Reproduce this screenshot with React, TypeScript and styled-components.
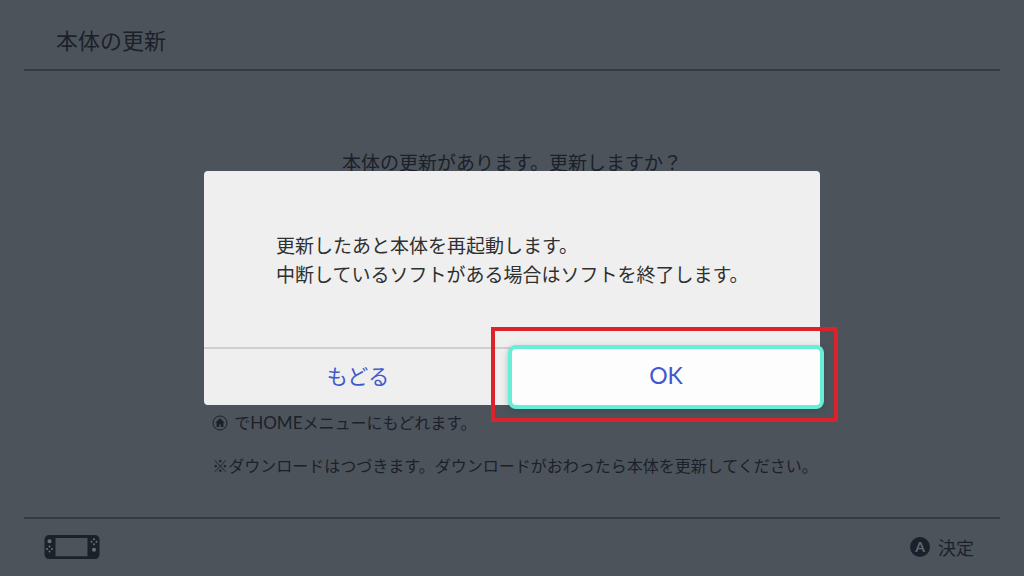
import React from "react";
import styled, { createGlobalStyle } from "styled-components";

const ink = "#1b212a";
const rule = "#343a42";

const GlobalStyle = createGlobalStyle`
  *, *::before, *::after { box-sizing: border-box; }
  body {
    margin: 0;
    background: #4d535b;
    color: ${ink};
    font-family: "Noto Sans CJK JP", sans-serif;
    font-size: 16px;
  }
  h1, p { margin: 0; font-weight: 400; }
`;

const Screen = styled.div`
  display: flex;
  flex-direction: column;
  min-height: 100vh;
  padding: 0 24px;
`;

const Header = styled.header`
  padding: 23px 32px 13px;
  border-bottom: 2px solid ${rule};
`;

const Title = styled.h1`
  font-size: 22px;
  line-height: 33px;
`;

const Main = styled.main`
  flex: 1;
  display: flex;
  flex-direction: column;
  align-items: center;
  justify-content: space-between;
  padding: 76px 0 40px;
`;

const Prompt = styled.p`
  font-size: 19px;
  line-height: 29px;
`;

const Notes = styled.div`
  display: flex;
  flex-direction: column;
  gap: 18px;
  padding-left: 6px;
  line-height: 24px;
`;

const Note = styled.p`
  display: flex;
  align-items: center;
  gap: 6px;
`;

const Latin = styled.span`
  font-family: Lato, sans-serif;
  font-size: 17px;
`;

const Footer = styled.footer`
  display: flex;
  align-items: center;
  justify-content: space-between;
  height: 59px;
  padding: 0 26px 2px 20px;
  border-top: 2px solid ${rule};
`;

const KeyHint = styled.div`
  display: flex;
  align-items: center;
  gap: 8px;
  font-size: 18px;
  line-height: 24px;
`;

const KeyBadge = styled.span`
  display: grid;
  place-items: center;
  width: 20px;
  height: 20px;
  border-radius: 50%;
  background: ${ink};
  color: #626870;
  font: 700 14px/20px Lato, sans-serif;
`;

const Backdrop = styled.div`
  position: fixed;
  inset: 0;
  display: flex;
  align-items: center;
  justify-content: center;
  padding: 24px;
`;

const Dialog = styled.section`
  width: 100%;
  max-width: 616px;
  border-radius: 4px;
  background: #efefef;
  color: #303030;
`;

const Message = styled.p`
  padding: 59px 64px 59px 72px;
  font-size: 19px;
  line-height: 29px;
`;

const Actions = styled.div`
  display: grid;
  grid-template-columns: 1fr 1fr;
  height: 58px;
  border-top: 2px solid #cfcfcf;
`;

const ActionCell = styled.div`
  position: relative;
  display: grid;
`;

const ActionButton = styled.button<{ $selected?: boolean }>`
  border: 0;
  border-radius: 4px;
  padding: 0 0 3px;
  background: ${(p) => (p.$selected ? "#fdfdfd" : "transparent")};
  box-shadow: ${(p) =>
    p.$selected ? "0 0 0 4px #66eed6, 0 2px 6px 4px rgba(30, 60, 65, 0.3)" : "none"};
  color: #4059cc;
  font-family: Lato, "Noto Sans CJK JP", sans-serif;
  font-size: ${(p) => (p.$selected ? 23 : 21)}px;
  line-height: 29px;
  cursor: pointer;
  outline: none;
`;

const Marker = styled.span`
  position: absolute;
  inset: -22px -18px -17px -21px;
  border: 4px solid #dc232b;
  pointer-events: none;
`;

const HomeIcon = () => (
  <svg width="16" height="16" viewBox="0 0 16 16" aria-hidden="true">
    <circle cx="8" cy="8" r="7" fill="none" stroke={ink} strokeWidth="1" />
    <path d="M8 3.2 3.4 7.4h1.2V12h2.6V9.500h1.6V12h2.6V7.4h1.2Z" fill={ink} />
  </svg>
);

const ConsoleIcon = () => (
  <svg width="56" height="24" viewBox="0 0 56 24" role="img" aria-label="本体">
    <path
      fillRule="evenodd"
      fill={ink}
      d="M5 0H51a4.5 4.5 0 0 1 4.5 4.5V19.5a4.5 4.5 0 0 1-4.5 4.5H5A4.5 4.5 0 0 1 .5 19.5V4.5A4.5 4.5 0 0 1 5 0ZM11.5 3V21.3H43.5V3Z"
    />
    <g fill="#6a7078">
      <circle cx="5.5" cy="6.3" r="2" />
      <circle cx="5.5" cy="11.5" r="1" />
      <circle cx="5.5" cy="16.5" r="1" />
      <circle cx="3" cy="14" r="1" />
      <circle cx="8" cy="14" r="1" />
      <circle cx="50" cy="4.3" r="1" />
      <circle cx="50" cy="9.3" r="1" />
      <circle cx="47.5" cy="6.8" r="1" />
      <circle cx="52.5" cy="6.8" r="1" />
      <circle cx="50" cy="14.8" r="2" />
    </g>
  </svg>
);

export default function App() {
  return (
    <>
      <GlobalStyle />
      <Screen>
        <Header>
          <Title>本体の更新</Title>
        </Header>
        <Main>
          <Prompt>本体の更新があります。更新しますか？</Prompt>
          <Notes>
            <Note>
              <HomeIcon />
              <span>
                で<Latin>HOME</Latin>メニューにもどれます。
              </span>
            </Note>
            <Note>※ダウンロードはつづきます。ダウンロードがおわったら本体を更新してください。</Note>
          </Notes>
        </Main>
        <Footer>
          <ConsoleIcon />
          <KeyHint>
            <KeyBadge>A</KeyBadge>
            決定
          </KeyHint>
        </Footer>
      </Screen>
      <Backdrop>
        <Dialog role="dialog" aria-modal="true" aria-labelledby="restart-message">
          <Message id="restart-message">
            更新したあと本体を再起動します。
            <br />
            中断しているソフトがある場合はソフトを終了します。
          </Message>
          <Actions>
            <ActionCell>
              <ActionButton type="button">もどる</ActionButton>
            </ActionCell>
            <ActionCell>
              <ActionButton type="button" $selected>
                OK
              </ActionButton>
              <Marker />
            </ActionCell>
          </Actions>
        </Dialog>
      </Backdrop>
    </>
  );
}
